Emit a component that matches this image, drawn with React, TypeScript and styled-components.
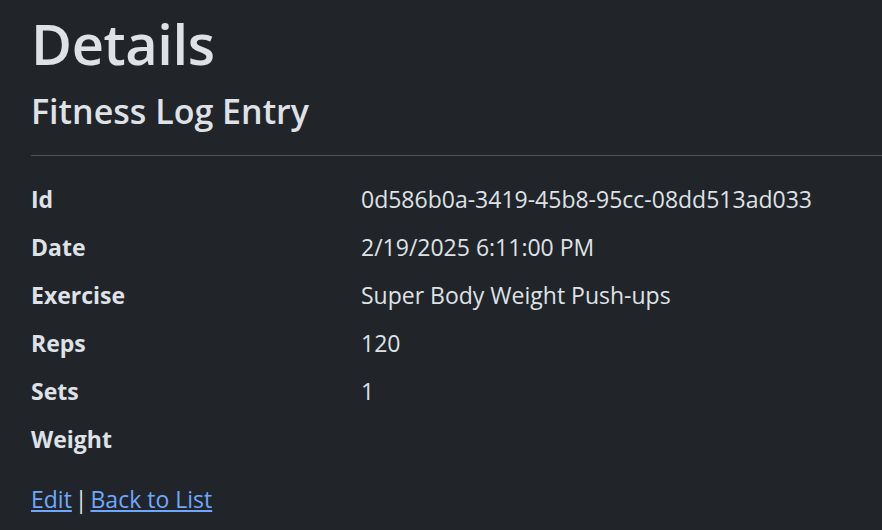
import React from "react";
import styled, { createGlobalStyle } from "styled-components";

const Global = createGlobalStyle`
  html, body { margin: 0; padding: 0; background: #212529; }
  body {
    color: #dee2e6;
    font-family: "Open Sans", "Noto Sans", sans-serif;
    font-size: 23px;
    line-height: 36px;
  }
`;

const Page = styled.main`
  padding: 7px 0 0 31px;
  overflow: hidden;
  height: 530px;
  box-sizing: border-box;
`;

const Title = styled.h1`
  margin: 0 0 11px;
  font-size: 56px;
  font-weight: 600;
  line-height: 72px;
  letter-spacing: -0.4px;
  color: #dee2e6;
`;

const Subtitle = styled.h4`
  margin: 0 0 11px;
  font-size: 34px;
  font-weight: 600;
  line-height: 43px;
  color: #dee2e6;
`;

const Rule = styled.hr`
  margin: 22px 0 25px;
  border: 0;
  border-top: 1.5px solid #dee2e6;
  opacity: 0.25;
  width: 1200px;
`;

const List = styled.dl`
  display: grid;
  grid-template-columns: 330px 1fr;
  margin: 0 0 12px;
`;

const Term = styled.dt`
  font-weight: 700;
  margin: 0 0 12px;
`;

const Desc = styled.dd`
  margin: 0 0 12px;
  min-height: 36px;
`;

const Actions = styled.div`
  display: flex;
  gap: 3px;
  align-items: baseline;
`;

const Link = styled.a`
  color: #6ea8fe;
  text-decoration: underline;
`;

const rows: [string, string][] = [
  ["Id", "0d586b0a-3419-45b8-95cc-08dd513ad033"],
  ["Date", "2/19/2025 6:11:00 PM"],
  ["Exercise", "Super Body Weight Push-ups"],
  ["Reps", "120"],
  ["Sets", "1"],
  ["Weight", ""],
];

export default function App() {
  return (
    <>
      <Global />
      <Page>
        <Title>Details</Title>
        <div>
          <Subtitle>Fitness Log Entry</Subtitle>
          <Rule />
          <List>
            {rows.map(([k, v]) => (
              <React.Fragment key={k}>
                <Term>{k}</Term>
                <Desc>{v}</Desc>
              </React.Fragment>
            ))}
          </List>
        </div>
        <Actions>
          <Link href="#">Edit</Link>
          <span>|</span>
          <Link href="#">Back to List</Link>
        </Actions>
      </Page>
    </>
  );
}
